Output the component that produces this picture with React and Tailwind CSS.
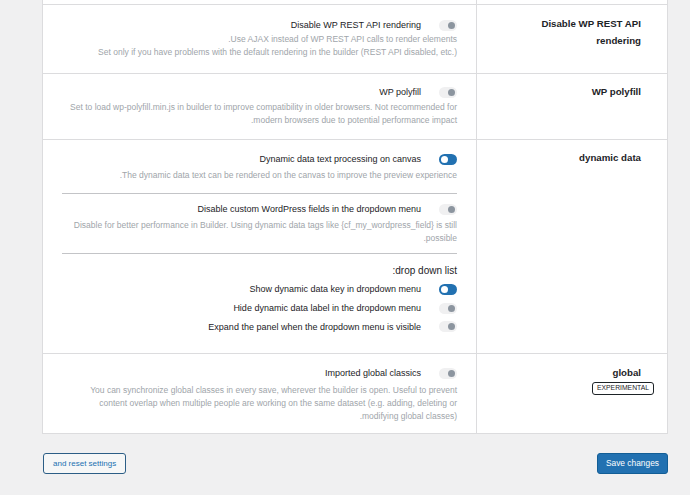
import React from "react";

function Toggle({ on }) {
  if (on) {
    return (
      <span className="flex items-center w-[18px] h-[11px] rounded-full bg-[#2271b1] px-[2px] shrink-0">
        <span className="w-[7px] h-[7px] rounded-full bg-white" />
      </span>
    );
  }
  return (
    <span className="flex items-center justify-end w-[18px] h-[11px] rounded-full bg-[#f0f0f1] px-[2px] shrink-0">
      <span className="w-[7px] h-[7px] rounded-full bg-[#8c959f]" />
    </span>
  );
}

function Option({ label, on, className = "" }) {
  return (
    <div className={"flex items-center justify-end gap-[18px] h-[14px] " + className}>
      <span className="text-[9px] leading-[14px] text-[#1d2327]">{label}</span>
      <Toggle on={on} />
    </div>
  );
}

function Desc({ lines, className = "" }) {
  return (
    <div className={"text-right text-[8.5px] leading-[13px] text-[#a0a5aa] " + className}>
      {lines.map((line, i) => (
        <div key={i}>{line}</div>
      ))}
    </div>
  );
}

function Row({ height, pt, headPt, heading, badge, children, last }) {
  return (
    <div
      className={
        "grid grid-cols-[434px_1fr] border-t border-[#dcdcde] " +
        height +
        (last ? " border-b" : "")
      }
    >
      <div className={"border-r border-[#dcdcde] pl-[19px] pr-[19px] " + pt}>{children}</div>
      <div className={"flex flex-col items-end pr-[13px] " + headPt}>
        <div className="pr-[13px] text-right text-[9.7px] leading-[17px] font-bold text-[#1d2327]">
          {heading}
        </div>
        {badge ? (
          <span className="mt-[1px] border border-[#1d2327] rounded-[3px] px-[4px] h-[13px] flex items-center text-[6.8px] text-[#1d2327]">
            {badge}
          </span>
        ) : null}
      </div>
    </div>
  );
}

export default function App() {
  return (
    <div className="w-[690px] h-[495px] bg-[#f0f0f1] pl-[42px] pr-[22px] font-[family-name:'Liberation_Sans',Arial,sans-serif] overflow-hidden">
      <div className="bg-white border-x border-[#dcdcde]">
        <div className="grid grid-cols-[434px_1fr] h-[4px]">
          <div className="border-r border-[#dcdcde]" />
          <div />
        </div>

        <Row
          height="h-[69px]"
          pt="pt-[13px]"
          headPt="pt-[10px]"
          heading={<>Disable WP REST API<br />rendering</>}
        >
          <Option label="Disable WP REST API rendering" />
          <Desc
            className="mt-[1px]"
            lines={[
              ".Use AJAX instead of WP REST API calls to render elements",
              "Set only if you have problems with the default rendering in the builder (REST API disabled, etc.)",
            ]}
          />
        </Row>

        <Row height="h-[66px]" pt="pt-[11px]" headPt="pt-[9px]" heading="WP polyfill">
          <Option label="WP polyfill" />
          <Desc
            className="mt-[2px]"
            lines={[
              "Set to load wp-polyfill.min.js in builder to improve compatibility in older browsers. Not recommended for",
              ".modern browsers due to potential performance impact",
            ]}
          />
        </Row>

        <Row height="h-[214px]" pt="pt-[12px]" headPt="pt-[9px]" heading="dynamic data">
          <Option label="Dynamic data text processing on canvas" on />
          <Desc
            className="mt-[3px]"
            lines={[".The dynamic data text can be rendered on the canvas to improve the preview experience"]}
          />
          <div className="mt-[11px] border-t border-[#c3c4c7]" />
          <Option className="mt-[8px]" label="Disable custom WordPress fields in the dropdown menu" />
          <div className="mt-[3px] text-right text-[8.5px] leading-[12.5px] text-[#a0a5aa]">
            <div>Disable for better performance in Builder. Using dynamic data tags like {"{cf_my_wordpress_field}"} is still</div>
            <div>.possible</div>
          </div>
          <div className="mt-[9px] border-t border-[#c3c4c7]" />
          <div className="mt-[10px] text-right text-[10px] leading-[14px] text-[#1d2327]">:drop down list</div>
          <Option className="mt-[4px]" label="Show dynamic data key in dropdown menu" on />
          <Option className="mt-[5px]" label="Hide dynamic data label in the dropdown menu" />
          <Option className="mt-[4.5px]" label="Expand the panel when the dropdown menu is visible" />
        </Row>

        <Row
          height="h-[81px]"
          pt="pt-[12px]"
          headPt="pt-[10px]"
          heading="global"
          badge="EXPERIMENTAL"
          last
        >
          <Option label="Imported global classics" />
          <Desc
            className="mt-[4px] leading-[13px]"
            lines={[
              "You can synchronize global classes in every save, wherever the builder is open. Useful to prevent",
              "content overlap when multiple people are working on the same dataset (e.g. adding, deleting or",
              ".modifying global classes)",
            ]}
          />
        </Row>
      </div>

      <div className="flex justify-between items-center mt-[19px] pl-[1px]">
        <button className="h-[21px] px-[9px] border border-[#2c5e86] rounded-[3px] bg-[#f6f7f7] text-[8px] text-[#2271b1] font-[family-name:'Liberation_Sans',Arial,sans-serif]">
          and reset settings
        </button>
        <button className="h-[21px] px-[8px] border border-[#135e96] rounded-[3px] bg-[#2271b1] text-[8.4px] text-white font-[family-name:'Liberation_Sans',Arial,sans-serif]">
          Save changes
        </button>
      </div>
    </div>
  );
}
